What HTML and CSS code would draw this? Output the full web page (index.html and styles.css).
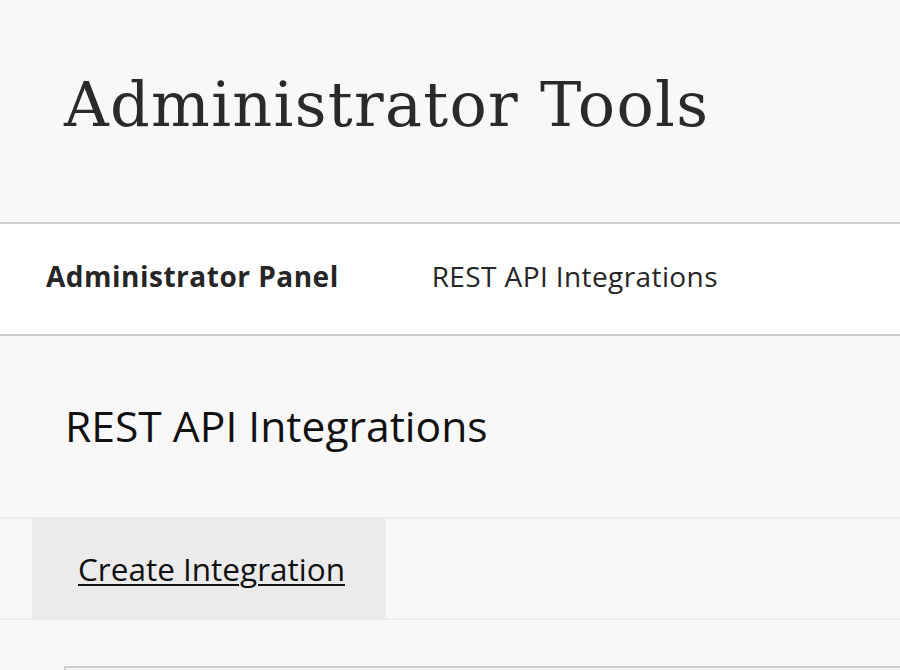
FILE: index.html
```html
<!DOCTYPE html>
<html lang="en">
<head>
  <meta charset="UTF-8" />
  <meta name="viewport" content="width=device-width, initial-scale=1.0"/>
  <title>Administrator Tools</title>
  <link rel="stylesheet" href="styles.css">
</head>
<body>
  <header class="page-head">
    <h1>Administrator Tools</h1>
  </header>
  <nav class="crumbs">
    <a class="crumb current" href="#">Administrator Panel</a>
    <span class="crumb">REST API Integrations</span>
  </nav>
  <main>
    <h2 class="section-title">REST API Integrations</h2>
    <div class="action-bar">
      <a class="action" href="#">Create Integration</a>
    </div>
    <div class="list-area">
      <div class="list-box"></div>
    </div>
  </main>
</body>
</html>
```

FILE: styles.css
```css
body {
  margin: 0;
  background: #f8f8f8;
  color: #262626;
  font-family: "Open Sans", sans-serif;
  overflow: hidden;
  height: 670px;
}
.page-head {
  height: 222px;
  border-bottom: 2px solid #cdcdcd;
  padding: 0 64px;
}
.page-head h1 {
  margin: 0;
  padding-top: 60px;
  font-family: "DejaVu Serif", serif;
  font-weight: normal;
  font-size: 62px;
  letter-spacing: 1.3px;
  line-height: 90px;
  color: #2a2a2a;
}
.crumbs {
  background: #fff;
  height: 110px;
  border-bottom: 2px solid #cdcdcd;
  display: flex;
  align-items: center;
  gap: 93px;
  padding: 0 46px;
}
.crumb {
  font-size: 28px;
  letter-spacing: 0.4px;
  color: #262626;
  text-decoration: none;
  margin-top: -6px;
}
.crumb.current {
  font-weight: bold;
  letter-spacing: 0.5px;
}
.section-title {
  margin: 0;
  height: 183px;
  box-sizing: border-box;
  padding: 61px 65px 0;
  font-weight: normal;
  font-size: 42.6px;
  line-height: 56px;
  color: #111;
  border-bottom: 2px solid #ececec;
}
.action-bar {
  height: 99px;
  border-bottom: 2px solid #ececec;
  padding-left: 32px;
  display: flex;
}
.action {
  background: #ebebeb;
  width: 354px;
  box-sizing: border-box;
  padding-left: 46px;
  display: flex;
  align-items: center;
  font-size: 31.5px;
  font-weight: 500;
  color: #111;
  text-decoration: underline;
  text-decoration-thickness: 2px;
  text-underline-offset: 3px;
}
.list-area {
  padding: 46px 0 0 64px;
}
.list-box {
  height: 2px;
  border-top: 2px solid #cfcfcf;
  border-left: 2px solid #cfcfcf;
  background: #f4f4f4;
}
```
